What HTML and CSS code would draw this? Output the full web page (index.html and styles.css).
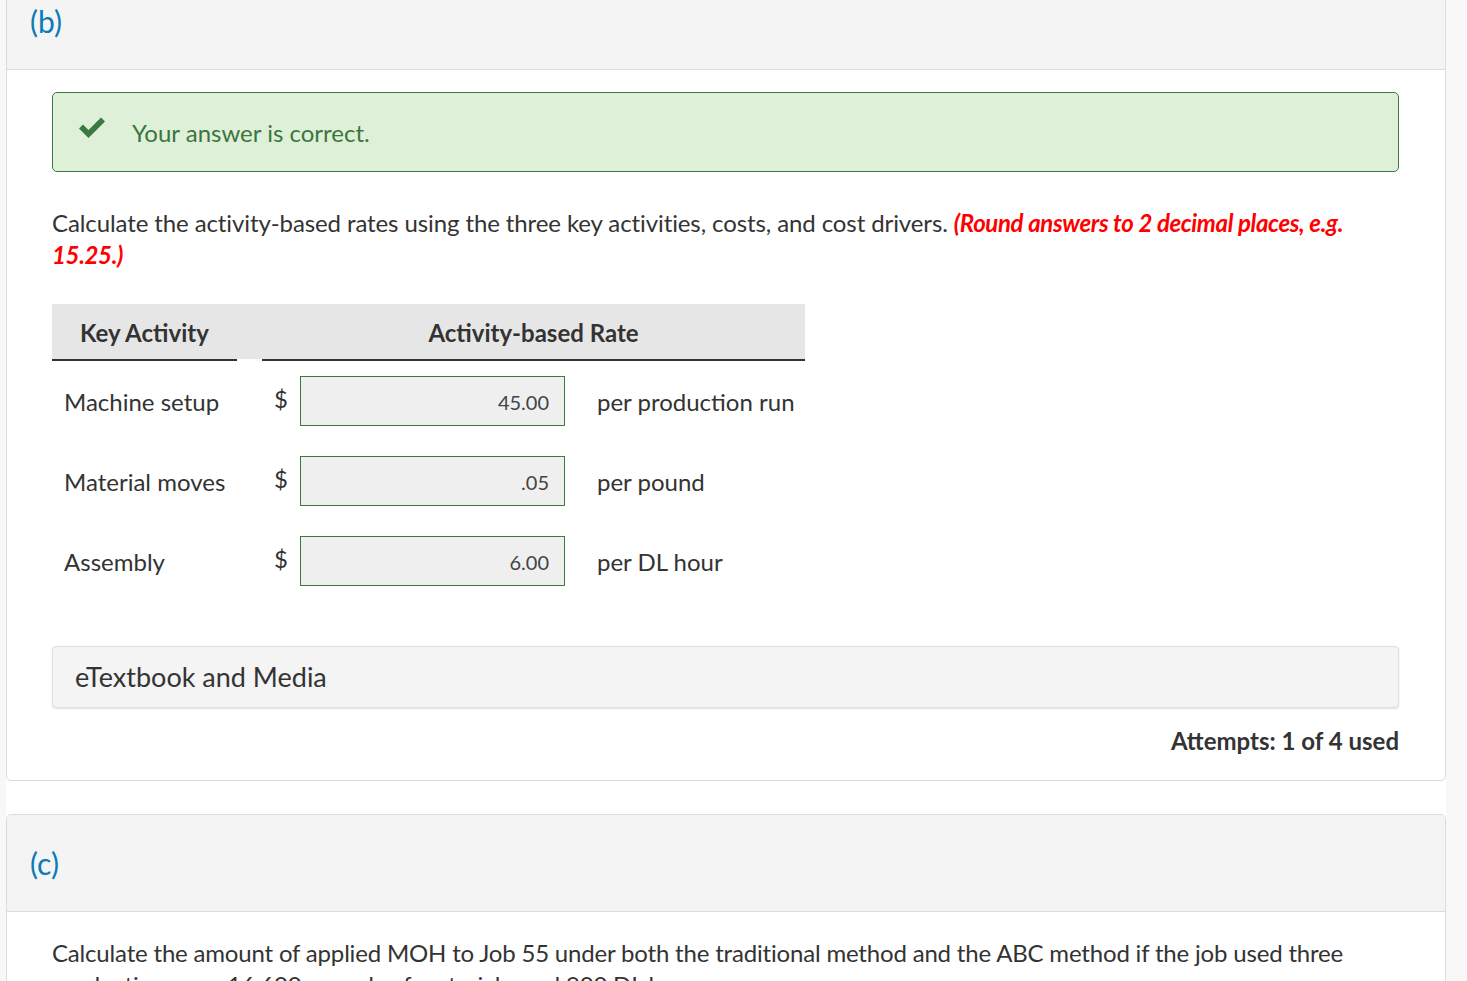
FILE: index.html
```html
<!DOCTYPE html>
<html lang="en">
<head>
  <meta charset="UTF-8">
  <meta name="viewport" content="width=device-width, initial-scale=1.0">
  <title>Question Parts</title>
  <link rel="stylesheet" href="styles.css">
</head>
<body>

<div class="wrapper">

  <div class="card card-b">
    <div class="card-header">(b)</div>
    <div class="card-body">
      <div class="alert-success">
        <svg class="check" width="28" height="22" viewBox="0 0 28 22">
          <path d="M1 11.5 L5 7.5 L10.5 13 L23 0.5 L27 4.5 L10.5 21 Z" fill="#3b7a3f"/>
        </svg>
        <span>Your answer is correct.</span>
      </div>

      <p class="question">
        Calculate the activity-based rates using the three key activities, costs, and cost drivers.
        <span class="hint">(Round answers to 2 decimal places, e.g. 15.25.)</span>
      </p>

      <div class="rate-table">
        <div class="rate-head">
          <div class="th th-activity">Key Activity</div>
          <div class="th-gap"></div>
          <div class="th th-rate">Activity-based Rate</div>
        </div>

        <div class="rate-row">
          <div class="cell-activity">Machine setup</div>
          <div class="cell-dollar">$</div>
          <input class="rate-input" type="text" value="45.00" readonly>
          <div class="cell-unit">per production run</div>
        </div>
        <div class="rate-row">
          <div class="cell-activity">Material moves</div>
          <div class="cell-dollar">$</div>
          <input class="rate-input" type="text" value=".05" readonly>
          <div class="cell-unit">per pound</div>
        </div>
        <div class="rate-row">
          <div class="cell-activity">Assembly</div>
          <div class="cell-dollar">$</div>
          <input class="rate-input" type="text" value="6.00" readonly>
          <div class="cell-unit">per DL hour</div>
        </div>
      </div>

      <div class="media-box">eTextbook and Media</div>

      <div class="attempts">Attempts: 1 of 4 used</div>
    </div>
  </div>

  <div class="card card-c">
    <div class="card-header">(c)</div>
    <div class="card-body">
      <p class="question">
        Calculate the amount of applied MOH to Job 55 under both the traditional method and the ABC method if the job used three
        production runs, 16,600 pounds of materials, and 900 DL hours.
      </p>
    </div>
  </div>

</div>

</body>
</html>
```

FILE: styles.css
```css
body {
  font-family: Lato, "Open Sans", Arial, sans-serif;
  margin: 0;
  padding: 0;
  background-color: #f8f8f8;
  color: #333;
  overflow: hidden;
}
.wrapper {
  width: 1440px;
  margin-left: 6px;
  margin-top: -28px;
  background-color: white;
}
.card {
  border: 1px solid #dcdcdc;
  border-radius: 5px;
  background-color: white;
  overflow: hidden;
}
.card-c {
  margin-top: 33px;
}
.card-header {
  background-color: #f4f4f4;
  border-bottom: 1px solid #dcdcdc;
  height: 96px;
  line-height: 96px;
  padding-left: 23px;
  font-size: 30px;
  color: #0a7ab8;
}
.card-body {
  padding: 22px 46px 25px 45px;
}
.card-c .card-body {
  padding-top: 25px;
}
.alert-success {
  display: flex;
  align-items: center;
  height: 78px;
  border: 1px solid #3b7a3f;
  border-radius: 5px;
  background-color: #dff0d8;
  color: #3c763d;
  font-size: 24px;
  padding-left: 25px;
}
.check {
  margin-right: 26px;
  margin-top: -8px;
}
.question {
  margin: 35px 0 0;
  font-size: 24px;
  line-height: 32px;
  letter-spacing: -0.1px;
}
.card-c .question {
  margin-top: 0;
  letter-spacing: -0.18px;
}
.hint {
  color: #ff0000;
  font-style: italic;
  font-weight: bold;
  letter-spacing: -0.35px;
}
.rate-table {
  margin-top: 33px;
  width: 753px;
}
.rate-head {
  display: flex;
  height: 57px;
}
.th {
  background-color: #e6e6e6;
  border-bottom: 2px solid #333;
  font-weight: bold;
  font-size: 24px;
  line-height: 57px;
}
.th-gap {
  width: 25px;
  background-color: #e6e6e6;
  border-bottom: 2px solid white;
}
.th-activity {
  width: 185px;
  padding-left: 28px;
  box-sizing: border-box;
}
.th-rate {
  flex: 1;
  text-align: center;
}
.rate-row {
  display: flex;
  align-items: center;
  height: 80px;
  font-size: 24px;
}
.cell-activity {
  width: 212px;
  padding-left: 12px;
  box-sizing: border-box;
}
.cell-dollar {
  width: 36px;
  margin-top: -6px;
  padding-left: 10px;
  box-sizing: border-box;
}
.rate-input {
  width: 265px;
  height: 50px;
  box-sizing: border-box;
  border: 1px solid #3b7a3f;
  background-color: #efefef;
  text-align: right;
  padding: 2px 15px 0;
  font-family: Lato, "Open Sans", Arial, sans-serif;
  font-size: 20px;
  color: #444;
}
.cell-unit {
  padding-left: 32px;
}
.media-box {
  margin-top: 45px;
  height: 60px;
  line-height: 60px;
  background-color: #f4f4f4;
  border: 1px solid #e0e0e0;
  border-radius: 4px;
  box-shadow: 0 1px 2px rgba(0, 0, 0, 0.12);
  padding-left: 22px;
  font-size: 27px;
}
.attempts {
  text-align: right;
  font-weight: bold;
  font-size: 24px;
  margin-top: 18px;
}
```
